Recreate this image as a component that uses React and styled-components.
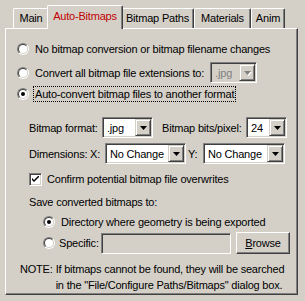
import React from 'react';
import styled, { createGlobalStyle } from 'styled-components';

const GlobalStyle = createGlobalStyle`
    body {
        margin: 0;
        background: #d4d0c8;
        font-family: "Liberation Sans", Arial, sans-serif;
        font-size: 11px;
        letter-spacing: -0.2px;
        color: #000;
    }
`;

const Window = styled.div`
    width: 305px;
    height: 301px;
    padding: 5px 0 0 5px;
    box-sizing: border-box;
    overflow: hidden;
`;

const TabStrip = styled.div`
    display: flex;
    align-items: flex-end;
    height: 23px;
    padding-left: 8px;
`;

const Tab = styled.div`
    position: relative;
    box-sizing: border-box;
    width: ${({ w }) => w}px;
    height: ${({ active }) => (active ? 24 : 20)}px;
    margin: ${({ active }) => (active ? '0 -2px -1px' : '0')};
    z-index: ${({ active }) => (active ? 2 : 1)};
    display: flex;
    align-items: center;
    justify-content: center;
    padding-bottom: ${({ active }) => (active ? 3 : 1)}px;
    background: #d4d0c8;
    border: 1px solid #fff;
    border-right-color: #404040;
    border-bottom: none;
    border-radius: 2px 2px 0 0;
    box-shadow: inset -1px 0 0 #808080;
    color: ${({ active }) => (active ? '#c00000' : '#000')};
`;

const Panel = styled.div`
    position: relative;
    box-sizing: border-box;
    width: 293px;
    height: 267px;
    border: 1px solid #fff;
    border-right-color: #404040;
    border-bottom-color: #404040;
    box-shadow: inset -1px -1px 0 #808080;
    padding-left: 11px;
    display: flex;
    flex-direction: column;
`;

const Row = styled.div`
    display: flex;
    align-items: center;
    height: ${({ h }) => h || 16}px;
    margin-top: ${({ mt }) => mt || 0}px;
    margin-left: ${({ indent }) => indent || 0}px;
    white-space: nowrap;
`;

const RadioDot = styled.span`
    position: relative;
    box-sizing: border-box;
    flex: none;
    width: 12px;
    height: 12px;
    border-radius: 50%;
    border: 1px solid;
    border-color: #808080 #fff #fff #808080;
    margin-right: 4px;

    &::before {
        content: '';
        position: absolute;
        inset: 0;
        border-radius: 50%;
        border: 1px solid;
        border-color: #404040 #d4d0c8 #d4d0c8 #404040;
        background: #fff;
    }

    &::after {
        content: '';
        display: ${({ checked }) => (checked ? 'block' : 'none')};
        position: absolute;
        left: 3px;
        top: 3px;
        width: 4px;
        height: 4px;
        border-radius: 50%;
        background: #000;
    }
`;

const Label = styled.span`
    padding: 1px 1px;
    border: 1px ${({ focused }) => (focused ? 'dotted #000' : 'solid transparent')};
`;

const Text = styled.span`
    flex: none;
    width: ${({ w }) => (w ? `${w}px` : 'auto')};
    margin-left: ${({ ml }) => ml || 0}px;
`;

const SelectBox = styled.div`
    position: relative;
    box-sizing: border-box;
    flex: none;
    width: ${({ w }) => w}px;
    height: 21px;
    margin-left: ${({ ml }) => ml || 0}px;
    border: 1px solid;
    border-color: #808080 #fff #fff #808080;
    box-shadow: inset 1px 1px 0 #404040, inset -1px -1px 0 #d4d0c8;
    background: ${({ disabled }) => (disabled ? '#d4d0c8' : '#fff')};
    color: ${({ disabled }) => (disabled ? '#808080' : '#000')};
    display: flex;
    align-items: center;
    padding-left: 4px;
`;

const DropButton = styled.span`
    position: absolute;
    right: 1px;
    top: 1px;
    bottom: 1px;
    width: 16px;
    box-sizing: border-box;
    background: #d4d0c8;
    border: 1px solid;
    border-color: #d4d0c8 #404040 #404040 #d4d0c8;
    box-shadow: inset 1px 1px 0 #fff, inset -1px -1px 0 #808080;
    display: flex;
    align-items: center;
    justify-content: center;
`;

const Arrow = ({ disabled }) => (
    <svg width="7" height="4" viewBox="0 0 7 4" style={{ overflow: 'visible' }}>
        {disabled && <path d="M1 1h7L4.5 5z" fill="#fff" />}
        <path d="M0 0h7L3.5 4z" fill={disabled ? '#808080' : '#000'} />
    </svg>
);

const Select = ({ value, w, ml, disabled }) => (
    <SelectBox w={w} ml={ml} disabled={disabled}>
        {value}
        <DropButton>
            <Arrow disabled={disabled} />
        </DropButton>
    </SelectBox>
);

const CheckBox = styled.span`
    box-sizing: border-box;
    flex: none;
    width: 13px;
    height: 13px;
    border: 1px solid;
    border-color: #808080 #fff #fff #808080;
    box-shadow: inset 1px 1px 0 #404040, inset -1px -1px 0 #d4d0c8;
    background: #fff;
    display: flex;
    align-items: center;
    justify-content: center;
    margin-right: 5px;
`;

const TextField = styled.div`
    box-sizing: border-box;
    flex: none;
    width: 130px;
    height: 21px;
    border: 1px solid;
    border-color: #808080 #fff #fff #808080;
    box-shadow: inset 1px 1px 0 #404040, inset -1px -1px 0 #d4d0c8;
    background: #d4d0c8;
`;

const Button = styled.div`
    box-sizing: border-box;
    flex: none;
    width: 54px;
    height: 22px;
    margin-left: 5px;
    border: 1px solid;
    border-color: #fff #404040 #404040 #fff;
    box-shadow: inset -1px -1px 0 #808080;
    display: flex;
    align-items: center;
    justify-content: center;

    u {
        text-decoration: underline;
    }
`;

const Note = styled.div`
    display: flex;
    margin-top: ${({ mt }) => mt}px;
    margin-left: 3px;
    line-height: 16px;
    white-space: nowrap;
`;

const NoteText = styled.div`
    margin-left: 3px;
`;

const Radio = ({ checked, children, focused }) => (
    <>
        <RadioDot checked={checked} />
        <Label focused={focused}>{children}</Label>
    </>
);

export default function App() {
    return (
        <Window>
            <GlobalStyle />
            <TabStrip>
                <Tab w={36}>Main</Tab>
                <Tab w={76} active>Auto-Bitmaps</Tab>
                <Tab w={73}>Bitmap Paths</Tab>
                <Tab w={57}>Materials</Tab>
                <Tab w={34}>Anim</Tab>
            </TabStrip>
            <Panel>
                <Row mt={12}>
                    <Radio>No bitmap conversion or bitmap filename changes</Radio>
                </Row>
                <Row mt={5} h={21}>
                    <Radio>Convert all bitmap file extensions to:</Radio>
                    <Select value=".jpg" w={47} ml={4} disabled />
                </Row>
                <Row mt={2} h={17}>
                    <Radio checked focused>Auto-convert bitmap files to another format</Radio>
                </Row>
                <Row mt={15} h={21} indent={12}>
                    <Text w={73}>Bitmap format:</Text>
                    <Select value=".jpg" w={51} />
                    <Text w={84} ml={9}>Bitmap bits/pixel:</Text>
                    <Select value="24" w={41} />
                </Row>
                <Row mt={5} h={21} indent={12}>
                    <Text w={61}>Dimensions:</Text>
                    <Text w={15}>X:</Text>
                    <Select value="No Change" w={81} />
                    <Text w={15} ml={2}>Y:</Text>
                    <Select value="No Change" w={82} />
                </Row>
                <Row mt={8} h={14} indent={12}>
                    <CheckBox>
                        <svg width="7" height="7" viewBox="0 0 7 7">
                            <path d="M0 2l2 2 5-5v2l-5 5-2-2z" fill="#000" />
                        </svg>
                    </CheckBox>
                    <Text>Confirm potential bitmap file overwrites</Text>
                </Row>
                <Row mt={9} h={14} indent={12}>
                    <Text>Save converted bitmaps to:</Text>
                </Row>
                <Row mt={5} indent={26}>
                    <Radio checked>Directory where geometry is being exported</Radio>
                </Row>
                <Row mt={2} h={22} indent={26}>
                    <RadioDot />
                    <Text w={42}>Specific:</Text>
                    <TextField />
                    <Button>
                        <span><u>B</u>rowse</span>
                    </Button>
                </Row>
                <Note mt={7}>
                    <span>NOTE:</span>
                    <NoteText>
                        If bitmaps cannot be found, they will be searched
                        <br />
                        in the "File/Configure Paths/Bitmaps" dialog box.
                    </NoteText>
                </Note>
            </Panel>
        </Window>
    );
}
